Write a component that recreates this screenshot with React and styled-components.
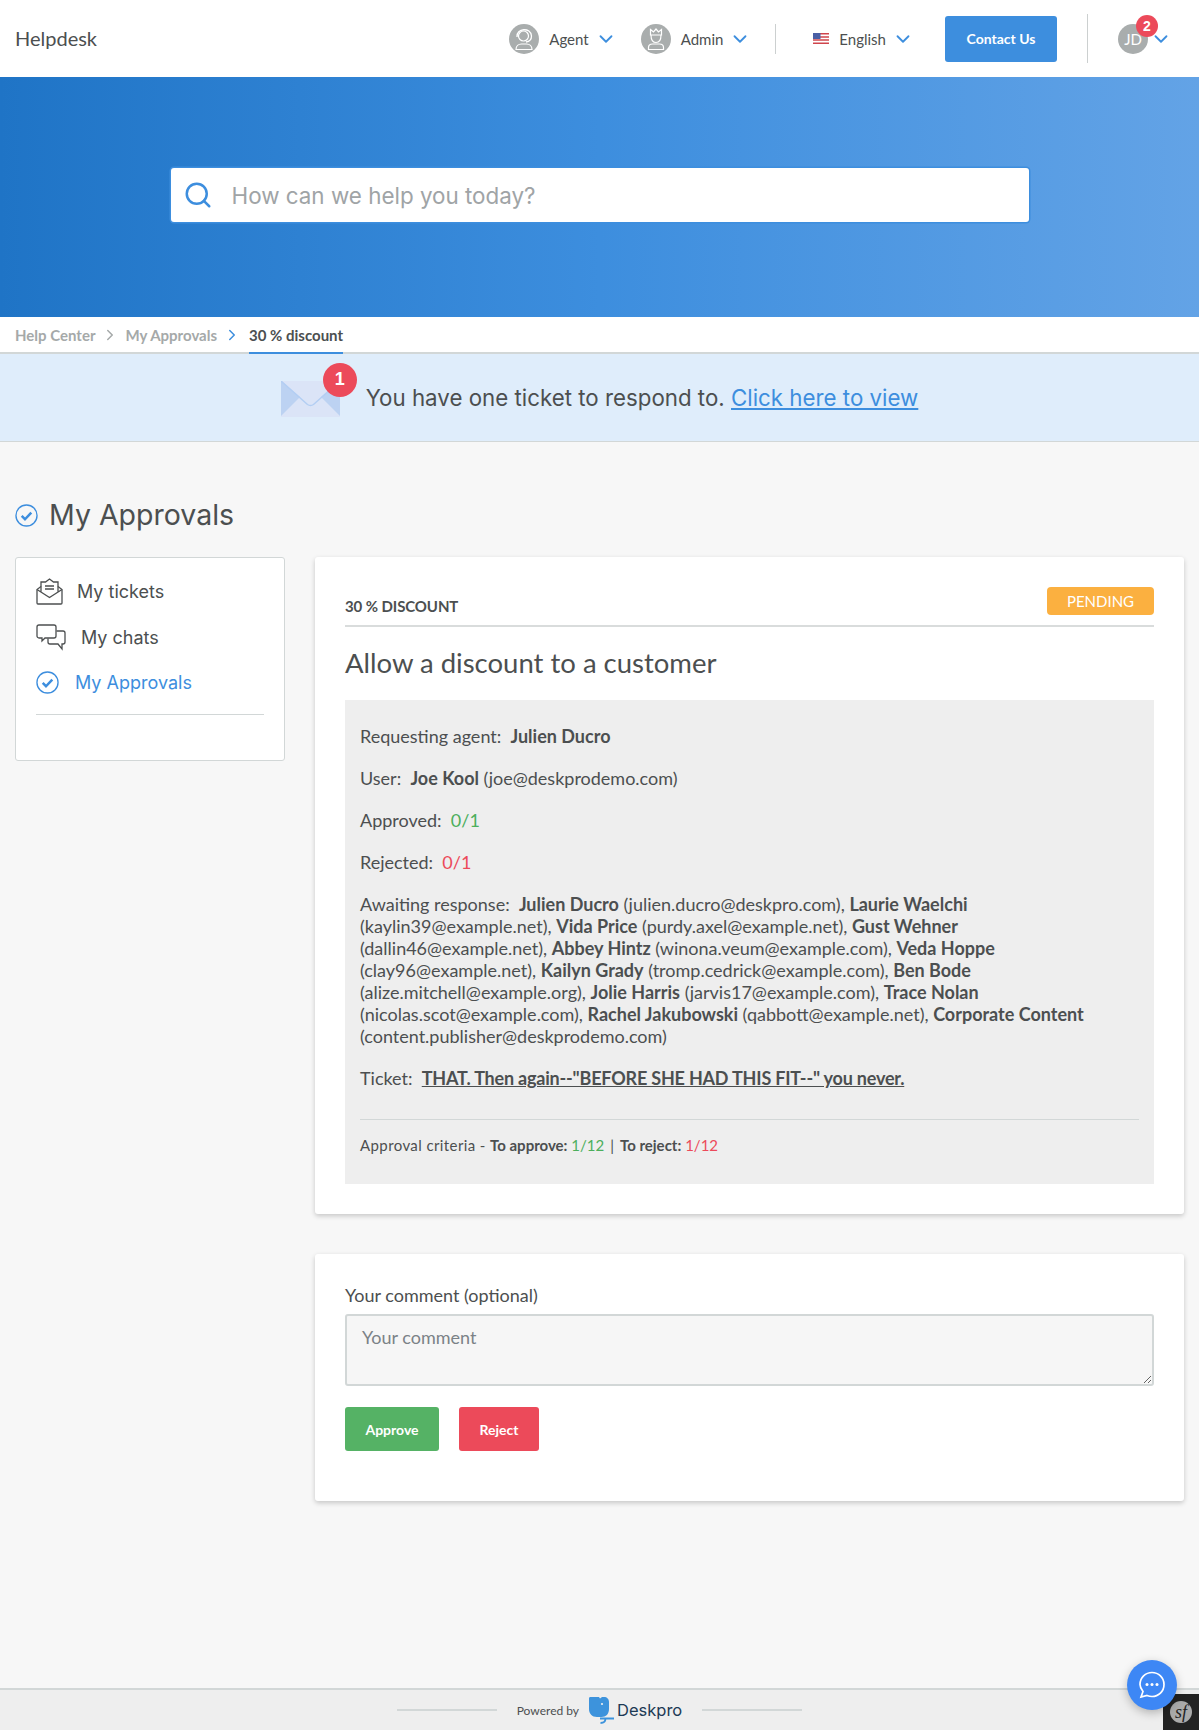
import React from "react";
import styled, { createGlobalStyle } from "styled-components";
import { ChevronDown, ChevronRight, Search } from "lucide-react";

const Global = createGlobalStyle`
  html, body { margin: 0; padding: 0; background: #f7f7f7; }
  body { font-family: Lato, "Liberation Sans", sans-serif; color: #4c4f50; }
  * { box-sizing: border-box; }
`;

const blue = "#3d8ede";

function CheckCircle({ size = 24 }) {
  return (
    <svg width={size} height={size} viewBox="0 0 24 24" fill="none">
      <circle cx="12" cy="12" r="11" stroke={blue} strokeWidth="1.4" />
      <path d="M7 12.500l3.400 3.400L17 9" stroke={blue} strokeWidth="2.600" fill="none" />
    </svg>
  );
}

function AgentIcon() {
  return (
    <svg width="30" height="30" viewBox="0 0 30 30" fill="none">
      <circle cx="15" cy="15" r="15" fill="#a9adad" />
      <circle cx="14.500" cy="12" r="5" stroke="#fff" strokeWidth="1.200" />
      <path d="M8 13c-1-9 14-10 14.500-1 0 3-1.500 5.500-5.500 6" stroke="#fff" strokeWidth="1.300" />
      <path d="M7 25.500c0-3.500 2.500-5.500 5.500-5.500h5c3 0 5.500 2 5.500 5.500z" stroke="#fff" strokeWidth="1.200" />
    </svg>
  );
}

function AdminIcon() {
  return (
    <svg width="30" height="30" viewBox="0 0 30 30" fill="none">
      <circle cx="15" cy="15" r="15" fill="#a9adad" />
      <path d="M9.500 5.500l3 2.500L15 5l2.500 3 3-2.500V11h-11z" stroke="#fff" strokeWidth="1.200" />
      <path d="M10 11c0 5.500 2.200 7.500 5 7.500s5-2 5-7.500" stroke="#fff" strokeWidth="1.200" />
      <path d="M7.500 25.500v-2c0-2.500 2-3.500 4-3.500h7c2 0 4 1 4 3.500v2z" stroke="#fff" strokeWidth="1.200" />
    </svg>
  );
}

function Flag() {
  return (
    <svg width="16" height="11" viewBox="0 0 16 11">
      <rect width="16" height="11" fill="#fff" />
      <path d="M0 .8h16M0 3.900h16M0 7h16M0 10.200h16" stroke="#d0454c" strokeWidth="1.500" />
      <rect width="7.500" height="6" fill="#4a5fa5" />
    </svg>
  );
}

function Envelope() {
  return (
    <svg width="59" height="36" viewBox="0 0 59 36">
      <rect width="59" height="36" fill="#dbe4f7" />
      <path d="M0 0l19 16L0 35zM59 0L40 16l19 19z" fill="#bcd2f2" />
      <path d="M0 0l26.500 23.500q3 2 6 0L59 0" stroke="#b3cef3" strokeWidth="1.500" fill="none" />
    </svg>
  );
}

function TicketsIcon() {
  return (
    <svg width="27" height="27" viewBox="0 0 27 27" fill="none" stroke="#4c4f50" strokeWidth="1.300">
      <path d="M1 11.500V25a1 1 0 0 0 1 1h23a1 1 0 0 0 1-1V11.500l-4-3V4h-4.500L13.500 1 9.500 4H5v4.500z" />
      <path d="M1 11.500l12.500 8 12.500-8M5 8.500v5.500M22 8.500v5.500M9 8h9M9 11h9" />
    </svg>
  );
}

function ChatsIcon() {
  return (
    <svg width="30" height="27" viewBox="0 0 30 27" fill="none" stroke="#4c4f50" strokeWidth="1.300">
      <path d="M3 1h15a2 2 0 0 1 2 2v9a2 2 0 0 1-2 2H9l-3 3v-3H3a2 2 0 0 1-2-2V3a2 2 0 0 1 2-2z" />
      <path d="M20.500 7H27a2 2 0 0 1 2 2v9a2 2 0 0 1-2 2h-1v5l-4-5h-8a2 2 0 0 1-2-2v-3.500" />
    </svg>
  );
}

function DeskproLogo() {
  return (
    <svg width="25" height="27" viewBox="0 0 25 27">
      <path d="M0 1.500C0 .5.500 0 1.500 0H10l1 1.500L13 0h2c3 0 5 2 5 5v7c0 5-3 8-7.500 8H8c-5 0-8-3.500-8-8z" fill="#3d93dc" />
      <circle cx="13" cy="7" r="1.100" fill="#eee" />
      <path d="M11 21.500h14M16.500 21.500c0 3-1.500 4.500-5 4.500" stroke="#3d93dc" strokeWidth="1.800" fill="none" />
    </svg>
  );
}

function ChatBubble() {
  return (
    <svg width="28" height="30" viewBox="0 0 28 30" fill="none">
      <path d="M14 2.500c6.500 0 12 5 12 12s-5.500 12-12 12c-2 0-3.500-.4-5-1l-6 1.500 2-5.500C3.500 19.500 2 17.500 2 14.500c0-7 5.500-12 12-12z" stroke="#fff" strokeWidth="1.700" />
      <circle cx="9" cy="14.500" r="1.500" fill="#fff" />
      <circle cx="14" cy="14.500" r="1.500" fill="#fff" />
      <circle cx="19" cy="14.500" r="1.500" fill="#fff" />
    </svg>
  );
}

function App() {
  return (
    <Page>
      <Global />
      <Header>
        <Brand>Helpdesk</Brand>
        <NavGroup>
          <NavItem><AgentIcon />Agent<Caret size={22} color={blue} /></NavItem>
          <NavItem><AdminIcon />Admin<Caret size={22} color={blue} /></NavItem>
        </NavGroup>
        <NavDivider />
        <LangItem><Flag />English<Caret size={22} color={blue} /></LangItem>
        <ContactButton>Contact Us</ContactButton>
        <TallDivider />
        <UserMenu>
          <UserAvatar>JD<Badge>2</Badge></UserAvatar>
          <Caret size={22} color={blue} />
        </UserMenu>
      </Header>
      <Hero>
        <SearchBox>
          <Search size={30} color={blue} strokeWidth={2} />
          <SearchText>How can we help you today?</SearchText>
        </SearchBox>
      </Hero>
      <Crumbs>
        <Crumb>Help Center</Crumb>
        <ChevronRight size={18} color="#a5a9a9" />
        <Crumb>My Approvals</Crumb>
        <ChevronRight size={18} color={blue} />
        <CurrentCrumb>30 % discount</CurrentCrumb>
      </Crumbs>
      <Notice>
        <EnvelopeWrap><Envelope /><NoticeBadge>1</NoticeBadge></EnvelopeWrap>
        <span>You have one ticket to respond to. <NoticeLink href="#x">Click here to view</NoticeLink></span>
      </Notice>
      <Content>
        <Title><CheckCircle size={23} />My Approvals</Title>
        <Columns>
          <Sidebar>
            <SideItem $gap={14}><TicketsIcon />My tickets</SideItem>
            <SideItem $gap={15}><ChatsIcon />My chats</SideItem>
            <SideItem $gap={16} $active><CheckCircle size={23} />My Approvals</SideItem>
            <SideRule />
          </Sidebar>
          <Main>
            <Card>
              <StatusRow>
                <StatusLabel>30 % DISCOUNT</StatusLabel>
                <Pending>PENDING</Pending>
              </StatusRow>
              <CardTitle>Allow a discount to a customer</CardTitle>
              <Details>
                <Line>Requesting agent: &nbsp;<b>Julien Ducro</b></Line>
                <Line>User: &nbsp;<b>Joe Kool</b> (joe@deskprodemo.com)</Line>
                <Line>Approved: &nbsp;<Green>0/1</Green></Line>
                <Line>Rejected: &nbsp;<Red>0/1</Red></Line>
                <Line>
                  Awaiting response: &nbsp;<b>Julien Ducro</b> (julien.ducro@deskpro.com), <b>Laurie Waelchi</b><br />
                  (kaylin39@example.net), <b>Vida Price</b> (purdy.axel@example.net), <b>Gust Wehner</b><br />
                  (dallin46@example.net), <b>Abbey Hintz</b> (winona.veum@example.com), <b>Veda Hoppe</b><br />
                  (clay96@example.net), <b>Kailyn Grady</b> (tromp.cedrick@example.com), <b>Ben Bode</b><br />
                  (alize.mitchell@example.org), <b>Jolie Harris</b> (jarvis17@example.com), <b>Trace Nolan</b><br />
                  (nicolas.scot@example.com), <b>Rachel Jakubowski</b> (qabbott@example.net), <b>Corporate Content</b><br />
                  (content.publisher@deskprodemo.com)
                </Line>
                <Line>Ticket: &nbsp;<TicketLink href="#x">THAT. Then again--"BEFORE SHE HAD THIS FIT--" you never.</TicketLink></Line>
                <Criteria>
                  <CriteriaLead>Approval criteria - </CriteriaLead><b>To approve:</b> <Green>1/12</Green><Pipe>|</Pipe><b>To reject:</b> <Red>1/12</Red>
                </Criteria>
              </Details>
            </Card>
            <CommentCard>
              <CommentLabel>Your comment (optional)</CommentLabel>
              <CommentInput placeholder="Your comment" />
              <Actions>
                <ActionButton $bg="#55b265" $w={94}>Approve</ActionButton>
                <ActionButton $bg="#ec4a5a" $w={80}>Reject</ActionButton>
              </Actions>
            </CommentCard>
          </Main>
        </Columns>
      </Content>
      <Footer>
        <FooterRule />
        <Powered>Powered by</Powered>
        <DeskproLogo />
        <DeskproName>Deskpro</DeskproName>
        <FooterRule />
      </Footer>
      <SfToolbar><SfMark>sf</SfMark></SfToolbar>
      <ChatButton><ChatBubble /></ChatButton>
    </Page>
  );
}

const Page = styled.div`
  min-height: 1730px;
  display: flex;
  flex-direction: column;
  position: relative;
`;

const Header = styled.header`
  height: 77px;
  background: #fff;
  display: flex;
  align-items: center;
  padding: 0 27px 0 15px;
`;

const Brand = styled.div`
  font-size: 20px;
  margin: 0 auto 2px 0;
`;

const NavGroup = styled.div`
  display: flex;
  gap: 24px;
`;

const NavItem = styled.div`
  display: flex;
  align-items: center;
  gap: 10px;
  font-size: 15px;
`;

const Caret = styled(ChevronDown)`
  margin: 0 0 0 -4px;
`;

const NavDivider = styled.div`
  width: 1px;
  height: 30px;
  background: #ccd0d0;
  margin: 0 37px 0 24px;
`;

const LangItem = styled(NavItem)`
  margin-right: 31px;
`;

const ContactButton = styled.button`
  width: 112px;
  height: 46px;
  background: #3d8ede;
  color: #fff;
  border: 0;
  border-radius: 3px;
  font: 700 14px Lato, sans-serif;
`;

const TallDivider = styled.div`
  width: 1px;
  height: 49px;
  background: #ccd0d0;
  margin: 0 30px;
`;

const UserMenu = styled.div`
  display: flex;
  align-items: center;
  gap: 6px;
`;

const UserAvatar = styled.div`
  width: 30px;
  height: 30px;
  border-radius: 50%;
  background: #a9adad;
  color: #fff;
  font-size: 15px;
  display: flex;
  align-items: center;
  justify-content: center;
  position: relative;
`;

const Badge = styled.span`
  position: absolute;
  top: -9px;
  left: 18px;
  width: 22px;
  height: 22px;
  border-radius: 50%;
  background: #ec4a5a;
  color: #fff;
  font: 700 14px "Liberation Sans", sans-serif;
  display: flex;
  align-items: center;
  justify-content: center;
`;

const Hero = styled.div`
  height: 240px;
  background: linear-gradient(90deg, #1f74c6, #3d8ede 50%, #63a3e6);
  display: flex;
  align-items: center;
  justify-content: center;
`;

const SearchBox = styled.div`
  width: 858px;
  height: 54px;
  margin-bottom: 4px;
  background: #fff;
  box-shadow: 0 0 0 1.500px #3d8ede;
  border-radius: 3px;
  display: flex;
  align-items: center;
  gap: 19px;
  padding: 0 12px;
`;

const SearchText = styled.span`
  font: 400 22.400px Inter, sans-serif;
  color: #a0a4a6;
`;

const Crumbs = styled.nav`
  height: 37px;
  background: #fff;
  display: flex;
  align-items: center;
  gap: 6px;
  padding: 0 15px;
  border-bottom: 2px solid #d2d7d7;
`;

const Crumb = styled.span`
  font-size: 15px;
  color: #a5a9a9;
  font-weight: 700;
`;

const CurrentCrumb = styled(Crumb)`
  color: #4c4f50;
  align-self: stretch;
  display: flex;
  align-items: center;
  margin-left: 2px;
  margin-bottom: -2px;
  border-bottom: 2px solid #3d8ede;
`;

const Notice = styled.div`
  height: 88px;
  background: #dfedfb;
  border-bottom: 1px solid #d2d7d7;
  display: flex;
  align-items: center;
  justify-content: center;
  gap: 26px;
  font: 400 22.300px Inter, sans-serif;
`;

const NoticeLink = styled.a`
  color: #3d8ede;
`;

const EnvelopeWrap = styled.div`
  position: relative;
  height: 36px;
  margin-top: 2px;
`;

const NoticeBadge = styled.span`
  position: absolute;
  top: -18px;
  right: -17px;
  width: 34px;
  height: 34px;
  border-radius: 50%;
  background: #ec4a5a;
  color: #fff;
  font: 700 18px "Liberation Sans", sans-serif;
  display: flex;
  align-items: center;
  justify-content: center;
`;

const Content = styled.main`
  flex: 1;
  padding: 54px 15px 0;
`;

const Title = styled.h1`
  margin: 0 0 23px;
  font: 400 28.500px/38px Inter, sans-serif;
  display: flex;
  align-items: center;
  gap: 11px;
`;

const Columns = styled.div`
  display: flex;
  gap: 30px;
  align-items: flex-start;
`;

const Sidebar = styled.aside`
  width: 270px;
  height: 204px;
  flex: none;
  background: #fff;
  border: 1px solid #d2d7d7;
  border-radius: 3px;
  padding: 11px 20px 0;
`;

const SideItem = styled.div`
  height: 45.500px;
  display: flex;
  align-items: center;
  gap: ${(p) => p.$gap}px;
  font: 400 18px Inter, sans-serif;
  color: ${(p) => (p.$active ? "#3d8ede" : "#4c4f50")};
`;

const SideRule = styled.div`
  height: 1px;
  background: #d2d7d7;
  margin-top: 8px;
`;

const Main = styled.div`
  flex: 1;
  display: flex;
  flex-direction: column;
  gap: 40px;
`;

const Card = styled.section`
  background: #fff;
  border-radius: 3px;
  box-shadow: 0 2px 5px rgba(0, 0, 0, 0.2);
  padding: 30px;
`;

const StatusRow = styled.div`
  display: flex;
  justify-content: space-between;
  align-items: flex-start;
  height: 40px;
  border-bottom: 2px solid #d9dcdc;
`;

const StatusLabel = styled.div`
  font-size: 15px;
  font-weight: 700;
  letter-spacing: -0.1px;
  margin-top: 10px;
`;

const Pending = styled.div`
  width: 107px;
  height: 28px;
  background: #fbb040;
  color: #fff;
  border-radius: 4px;
  font-size: 15px;
  display: flex;
  align-items: center;
  justify-content: center;
`;

const CardTitle = styled.h2`
  margin: 17px 0 18px;
  font: 400 27.500px/38px Lato, sans-serif;
`;

const Details = styled.div`
  background: #eee;
  padding: 25px 15px 0;
  height: 484px;
  font-size: 18px;
  line-height: 22px;
`;

const Line = styled.p`
  margin: 0 0 20px;
`;

const Green = styled.span`
  color: #4caf5c;
`;

const Red = styled.span`
  color: #ec4a5a;
`;

const TicketLink = styled.a`
  color: #4c4f50;
  font-weight: 700;
  letter-spacing: -0.2px;
`;

const Criteria = styled.div`
  border-top: 1px solid #d2d7d7;
  margin-top: 30px;
  padding-top: 14px;
  font-size: 15px;
`;

const CriteriaLead = styled.span`
  letter-spacing: 0.4px;
`;

const Pipe = styled.span`
  margin: 0 6px;
`;

const CommentCard = styled(Card)`
  height: 247px;
  padding-top: 30px;
`;

const CommentLabel = styled.div`
  font-size: 18px;
  line-height: 22px;
  margin-bottom: 8px;
`;

const CommentInput = styled.textarea`
  display: block;
  width: 100%;
  height: 72px;
  background: #f6f6f6;
  border: 2px solid #d2d7d7;
  border-radius: 3px;
  padding: 10px 15px;
  font: 400 18px Lato, sans-serif;
  &::placeholder { color: #7b8287; }
`;

const Actions = styled.div`
  display: flex;
  gap: 20px;
  margin-top: 21px;
`;

const ActionButton = styled.button`
  width: ${(p) => p.$w}px;
  height: 44px;
  background: ${(p) => p.$bg};
  color: #fff;
  border: 0;
  border-radius: 3px;
  font: 700 14px Lato, sans-serif;
`;

const Footer = styled.footer`
  height: 42px;
  background: #eee;
  border-top: 2px solid #d2d7d7;
  display: flex;
  align-items: center;
  justify-content: center;
`;

const FooterRule = styled.div`
  width: 100px;
  height: 2px;
  background: #d2d7d7;
  margin: 0 20px;
`;

const Powered = styled.span`
  font-size: 12px;
  margin-right: 10px;
`;

const DeskproName = styled.span`
  font: 400 16.500px Inter, sans-serif;
  color: #1d3a55;
  margin-left: 3px;
`;

const SfToolbar = styled.div`
  position: absolute;
  right: 0;
  bottom: 0;
  width: 36px;
  height: 36px;
  background: #222;
  display: flex;
  align-items: center;
  justify-content: center;
`;

const SfMark = styled.span`
  width: 22px;
  height: 22px;
  border-radius: 50%;
  background: #aaa;
  color: #222;
  font: italic 400 18px "Liberation Serif", serif;
  display: flex;
  align-items: center;
  justify-content: center;
`;

const ChatButton = styled.div`
  position: absolute;
  right: 22px;
  bottom: 20px;
  width: 50px;
  height: 50px;
  border-radius: 50%;
  background: #3d87f5;
  box-shadow: 0 3px 10px rgba(0, 0, 0, 0.25);
  display: flex;
  align-items: center;
  justify-content: center;
`;

export default App;
